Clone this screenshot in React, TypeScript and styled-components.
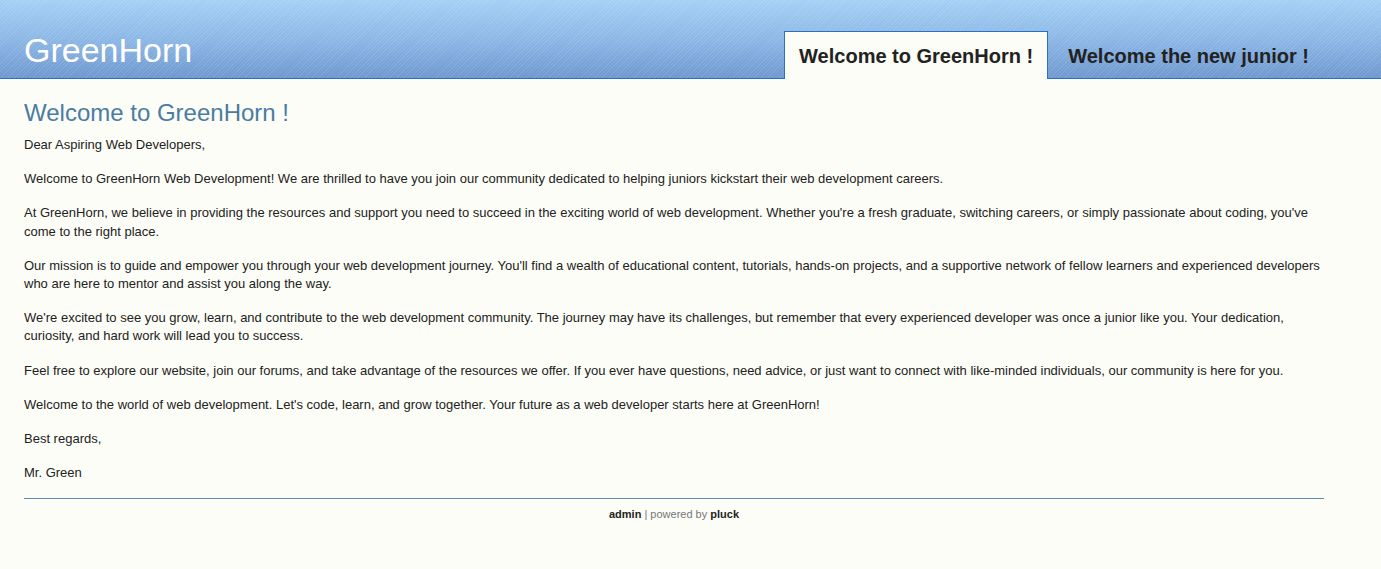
import React from "react";
import styled, { createGlobalStyle } from "styled-components";

const Global = createGlobalStyle`
  html, body { margin: 0; padding: 0; background: #fcfdf6; }
  body { font-family: "Liberation Sans", Arial, sans-serif; color: #222; }
`;

const Header = styled.header`
  height: 78px;
  border-bottom: 1px solid #2a72bf;
  background:
    repeating-linear-gradient(135deg, rgba(255,255,255,0.1) 0 1px, rgba(255,255,255,0) 1px 2.5px),
    linear-gradient(180deg, #a3d0f5 0%, #8bb7e6 50%, #6f97cf 100%);
  display: flex;
  align-items: flex-end;
  justify-content: space-between;
  padding-left: 24px;
  padding-right: 57px;
`;

const Logo = styled.div`
  color: #ffffff;
  font-size: 34px;
  line-height: 40px;
  align-self: flex-start;
  margin-top: 30px;
`;

const Tabs = styled.nav`
  display: flex;
  align-items: flex-end;
  margin-bottom: -1px;
`;

const Tab = styled.a<{ $active?: boolean }>`
  display: block;
  height: 48px;
  box-sizing: border-box;
  padding: 12px 14px 0 14px;
  font-size: 20px;
  font-weight: bold;
  line-height: 24px;
  color: #222;
  text-decoration: none;
  background: ${(p) => (p.$active ? "#fcfdf6" : "transparent")};
  border: 1px solid ${(p) => (p.$active ? "#2a72bf" : "transparent")};
  border-bottom: none;
  margin-right: ${(p) => (p.$active ? "5px" : "0")};
`;

const Main = styled.main`
  width: 1300px;
  padding: 0 24px;
`;

const Title = styled.h1`
  margin: 19px 0 8px 0;
  font-size: 24px;
  font-weight: normal;
  line-height: 30px;
  color: #4a7ca3;
`;

const Para = styled.p`
  margin: 0 0 16px 0;
  font-size: 13px;
  line-height: 18.2px;
  color: #222;
`;

const Footer = styled.footer`
  border-top: 1px solid #5b8bb0;
  margin-top: 15px;
  padding-top: 8px;
  text-align: center;
  font-size: 11px;
  line-height: 14px;
  color: #777;
`;

const Strong = styled.a`
  color: #222;
  font-weight: bold;
  text-decoration: none;
`;

export default function App() {
  return (
    <>
      <Global />
      <Header>
        <Logo>GreenHorn</Logo>
        <Tabs>
          <Tab $active href="#">Welcome to GreenHorn !</Tab>
          <Tab href="#">Welcome the new junior !</Tab>
        </Tabs>
      </Header>
      <Main>
        <Title>Welcome to GreenHorn !</Title>
        <Para>Dear Aspiring Web Developers,</Para>
        <Para>Welcome to GreenHorn Web Development! We are thrilled to have you join our community dedicated to helping juniors kickstart their web development careers.</Para>
        <Para>At GreenHorn, we believe in providing the resources and support you need to succeed in the exciting world of web development. Whether you're a fresh graduate, switching careers, or simply passionate about coding, you've come to the right place.</Para>
        <Para>Our mission is to guide and empower you through your web development journey. You'll find a wealth of educational content, tutorials, hands-on projects, and a supportive network of fellow learners and experienced developers who are here to mentor and assist you along the way.</Para>
        <Para>We're excited to see you grow, learn, and contribute to the web development community. The journey may have its challenges, but remember that every experienced developer was once a junior like you. Your dedication, curiosity, and hard work will lead you to success.</Para>
        <Para>Feel free to explore our website, join our forums, and take advantage of the resources we offer. If you ever have questions, need advice, or just want to connect with like-minded individuals, our community is here for you.</Para>
        <Para>Welcome to the world of web development. Let's code, learn, and grow together. Your future as a web developer starts here at GreenHorn!</Para>
        <Para>Best regards,</Para>
        <Para>Mr. Green</Para>
        <Footer>
          <Strong href="#">admin</Strong> | powered by <Strong href="#">pluck</Strong>
        </Footer>
      </Main>
    </>
  );
}
